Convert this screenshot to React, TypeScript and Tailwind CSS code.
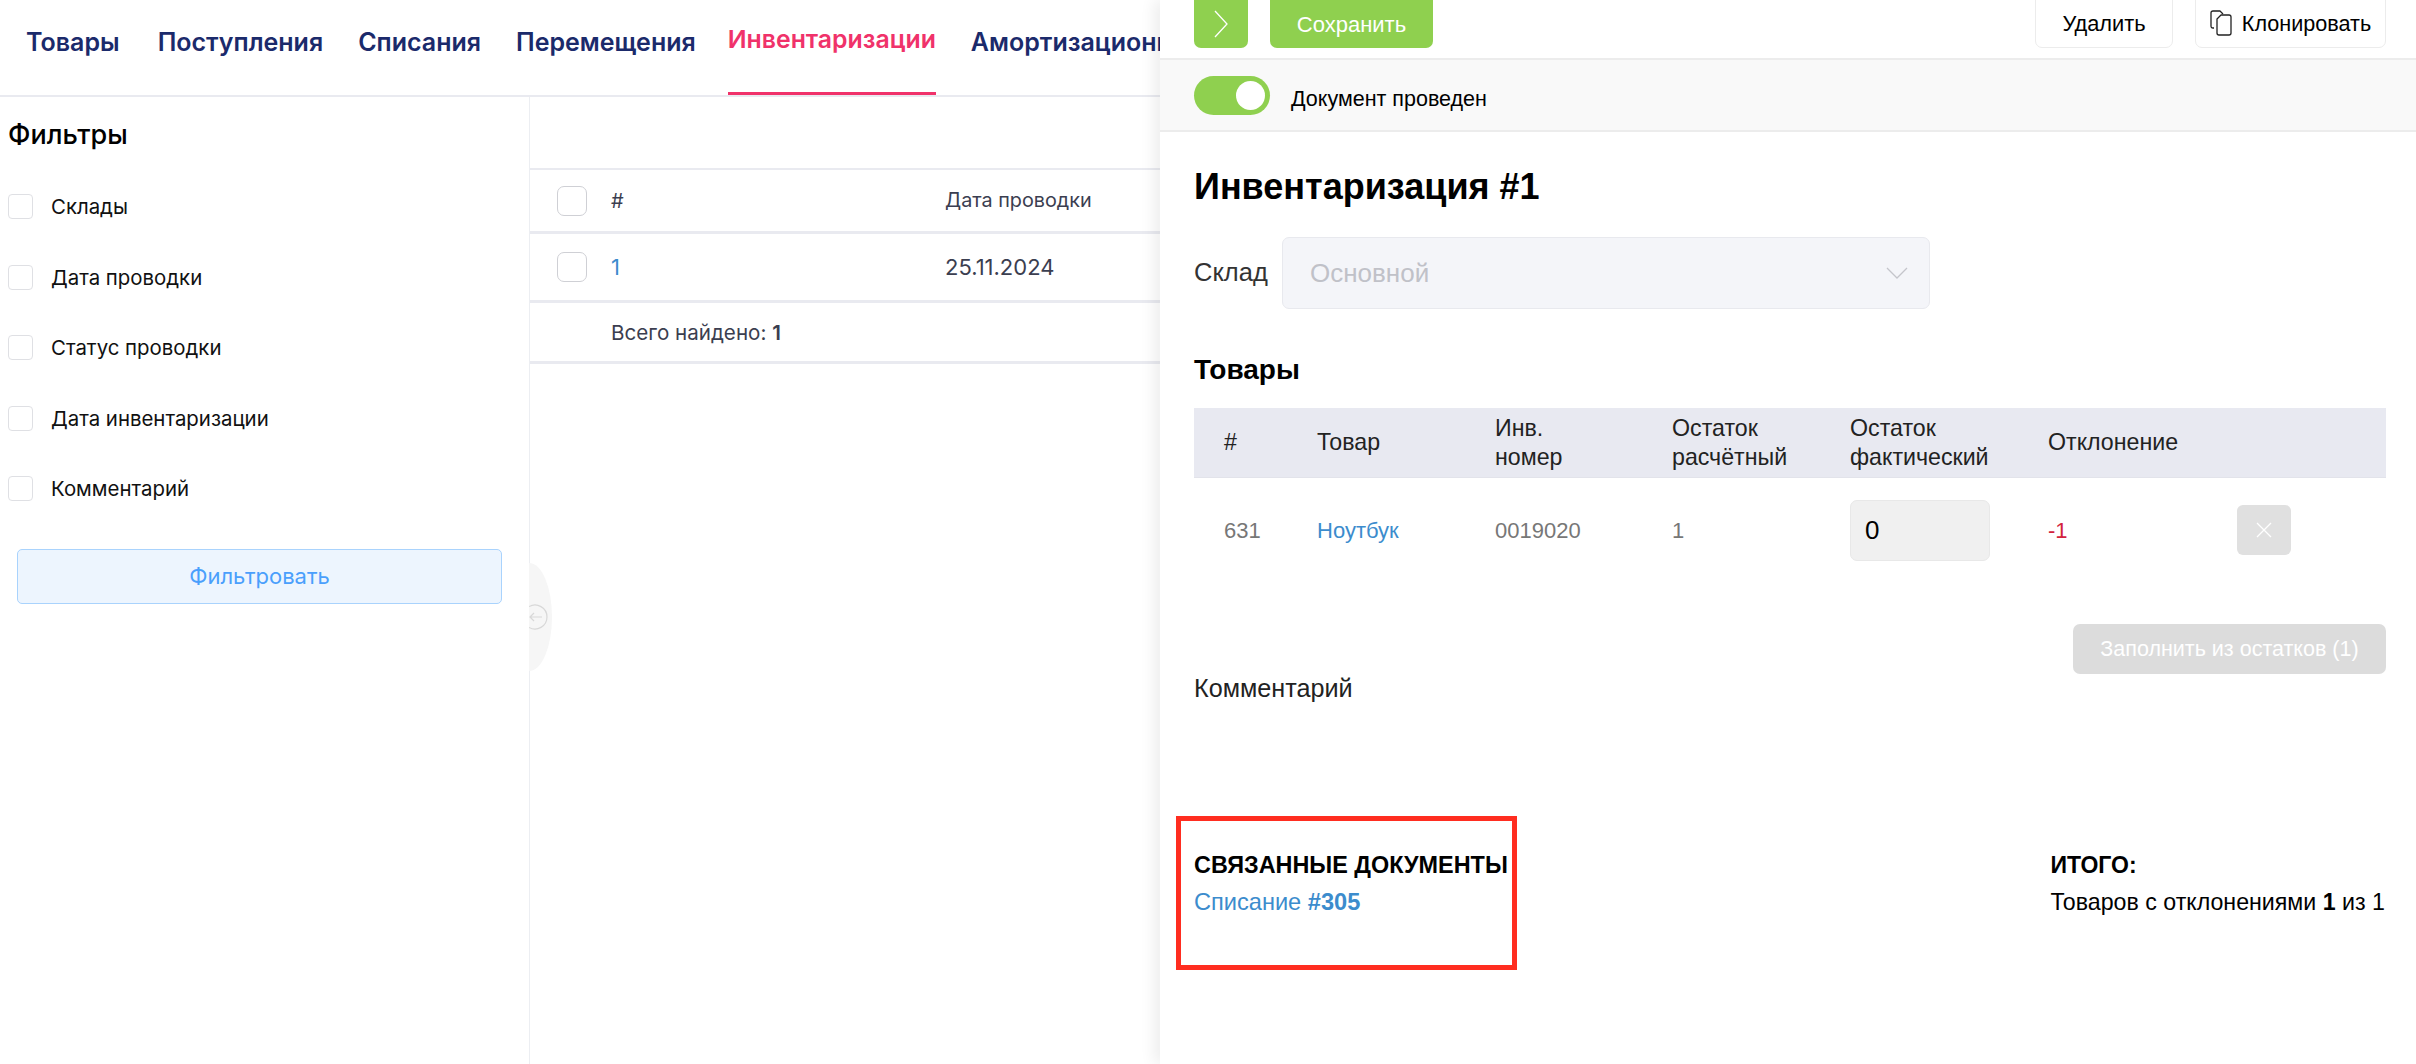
import React from "react";

const filters = ["Склады", "Дата проводки", "Статус проводки", "Дата инвентаризации", "Комментарий"];
const tabs = ["Товары", "Поступления", "Списания", "Перемещения", "Инвентаризации", "Амортизационные"];

function Box({ cls }: { cls: string }) {
  return <span className={"block shrink-0 bg-white border " + cls} />;
}

export default function App() {
  return (
    <div className="relative w-[2416px] h-[1064px] overflow-hidden bg-white font-['Inter',sans-serif] text-[20px] text-[#111]">
      {/* Tabs */}
      <div className="h-[97px] flex gap-[35px] pl-[26px] border-b-2 border-[#e9eaf0] overflow-hidden">
        {tabs.map((t) =>
          t === "Инвентаризации" ? (
            <div key={t} className="ml-[-3px] h-[95px] border-b-[3px] border-[#f0326a] text-[#f0326a] font-semibold text-[24.8px] whitespace-nowrap leading-[78px]">
              {t}
            </div>
          ) : (
            <div key={t} className={(t === "Товары" ? "mr-[3px] " : "") + "h-[95px] text-[#1b2a6b] font-semibold text-[25px] whitespace-nowrap leading-[84px]"}>
              {t}
            </div>
          )
        )}
      </div>

      <div className="flex h-[967px]">
        {/* Filters */}
        <aside className="relative w-[530px] shrink-0 border-r border-[#eceef2] pl-[8px]">
          <h2 className="text-[27px] leading-[32px] font-medium text-black pt-[22px] h-[80px] box-content">Фильтры</h2>
          <div className="flex flex-col gap-[45.5px] mt-[-5px]">
            {filters.map((f) => (
              <label key={f} className="flex items-center gap-[18px] h-[25px]">
                <Box cls="w-[25px] h-[25px] rounded-[4px] border-[#dfe0e4]" />
                <span className="leading-[27px] text-[20.4px] whitespace-nowrap">{f}</span>
              </label>
            ))}
          </div>
          <button className="mt-[48px] ml-[9px] w-[485px] h-[55px] rounded-[5px] border border-[#a9d3fd] bg-[#edf5fe] text-[#4a9ffc] text-[22px]">
            Фильтровать
          </button>
          <div className="absolute left-[529px] top-[466px] w-[23px] h-[108px] bg-[#f6f6f6] rounded-tr-[100%_50%] rounded-br-[100%_50%] flex items-center">
            <svg width="19" height="28" viewBox="0 0 19 28" fill="none" stroke="#d8d8d8" strokeWidth="1.2">
              <path d="M0 3.6 A12 12 0 1 1 0 24.4" />
              <path d="M1 14 H13 M5 10 L1 14 L5 18" />
            </svg>
          </div>
        </aside>

        {/* List */}
        <main className="flex-1 pt-[71px] text-[#3b3e50]">
          <div className="h-[66px] border-t-2 border-b-[3px] border-[#e9eaf0] flex items-center pl-[27px]">
            <Box cls="w-[30px] h-[30px] rounded-[7px] border-[#cfd0d5]" />
            <span className="ml-[24px] w-[334px]">#</span>
            <span className="text-[19.8px]">Дата проводки</span>
          </div>
          <div className="h-[69px] border-b-[3px] border-[#e9eaf0] flex items-center pl-[27px]">
            <Box cls="w-[30px] h-[30px] rounded-[7px] border-[#cfd0d5]" />
            <span className="ml-[24px] w-[334px] text-[#3c8ccd] text-[22px]">1</span>
            <span className="text-[22px]">25.11.2024</span>
          </div>
          <div className="h-[61px] border-b-[3px] border-[#e9eaf0] flex items-center pl-[81px] pt-[2px]">
            <span className="text-[20.6px]">
              Всего найдено: <span className="font-semibold">1</span>
            </span>
          </div>
        </main>
      </div>

      {/* Document panel */}
      <section className="absolute left-[1160px] top-0 w-[1256px] h-[1064px] bg-white shadow-[-6px_0_14px_rgba(0,0,0,0.07)] font-['Liberation_Sans',sans-serif] flex flex-col">
        <div className="h-[60px] shrink-0 border-b-2 border-[#ececec] pl-[34px] pr-[30px] flex items-end pb-[10px] overflow-hidden">
          <button className="w-[54px] h-[60px] rounded-b-[7px] bg-[#8fd04f] flex items-center justify-center pt-[12px]">
            <svg width="16" height="34" viewBox="0 0 16 34" fill="none" stroke="#fff" strokeWidth="1.3">
              <path d="M2 4 L14 17 L2 30" />
            </svg>
          </button>
          <button className="ml-[22px] w-[163px] h-[60px] rounded-b-[7px] bg-[#8fd04f] text-white text-[22px] pt-[12px]">
            Сохранить
          </button>
          <button className="ml-auto w-[138px] h-[60px] rounded-b-[7px] border border-[#ececec] text-black text-[21.8px] pt-[12px]">
            Удалить
          </button>
          <button className="ml-[22px] w-[191px] h-[60px] rounded-b-[7px] border border-[#ececec] text-black text-[21.6px] pt-[12px] flex items-center justify-center gap-[10px]">
            <svg width="22" height="26" viewBox="0 0 22 26" fill="none" stroke="#222" strokeWidth="1.3" strokeLinejoin="round" className="mt-[-2px]">
              <path d="M4 18 H3 Q1 18 1 16 V3 Q1 1 3 1 H10 L13 4" />
              <path d="M7 9 L11 5 H19 Q21 5 21 7 V23 Q21 25 19 25 H9 Q7 25 7 23 Z" />
            </svg>
            Клонировать
          </button>
        </div>

        <div className="h-[72px] shrink-0 bg-[#f9f9f9] border-b-2 border-[#ececec] pl-[34px] flex items-center gap-[21px]">
          <span className="relative w-[76px] h-[39px] rounded-full bg-[#8fd04f]">
            <span className="absolute right-[5px] top-[5px] w-[29px] h-[29px] rounded-full bg-white" />
          </span>
          <span className="text-[21.5px] text-black mt-[8px]">Документ проведен</span>
        </div>

        <div className="pl-[34px] pr-[30px]">
          <h1 className="mt-[34px] text-[36px] leading-[42px] font-bold text-black">Инвентаризация #1</h1>

          <div className="mt-[29px] flex items-center">
            <span className="w-[88px] text-[25.5px] text-[#333] mt-[-2px]">Склад</span>
            <div className="w-[648px] h-[72px] rounded-[7px] bg-[#f4f5f9] border border-[#e8e9ee] flex items-center pl-[27px] pr-[21px] justify-between">
              <span className="text-[26px] text-[#c0c1c8] mt-[1px]">Основной</span>
              <svg width="22" height="12" viewBox="0 0 22 12" fill="none" stroke="#c4c5cb" strokeWidth="1.3">
                <path d="M1 1 L11 11 L21 1" />
              </svg>
            </div>
          </div>

          <h2 className="mt-[43px] text-[28px] leading-[36px] font-bold text-black">Товары</h2>

          <div className="mt-[20px] h-[70px] bg-[#e8e9f1] border-b border-[#e2e3ea] grid grid-cols-[93px_178px_177px_178px_198px_1fr] pl-[30px] items-center text-[23.2px] leading-[29px] text-[#222]">
            <span>#</span>
            <span>Товар</span>
            <span>Инв.<br />номер</span>
            <span>Остаток<br />расчётный</span>
            <span>Остаток<br />фактический</span>
            <span>Отклонение</span>
          </div>

          <div className="h-[104px] grid grid-cols-[93px_178px_177px_178px_198px_189px_1fr] pl-[30px] items-center text-[22px] text-[#777]">
            <span>631</span>
            <span className="text-[#3c8ccd]">Ноутбук</span>
            <span>0019020</span>
            <span>1</span>
            <div className="w-[140px] h-[61px] rounded-[7px] bg-[#f0f0f0] border border-[#e8e8e8] flex items-center pl-[14px] text-[26px] text-black">0</div>
            <span className="text-[#d2223c]">-1</span>
            <span className="w-[54px] h-[50px] rounded-[6px] bg-[#e0e0e0] flex items-center justify-center">
              <svg width="18" height="18" viewBox="0 0 18 18" stroke="#fff" strokeWidth="1.3">
                <path d="M2 2 L16 16 M16 2 L2 16" />
              </svg>
            </span>
          </div>

          <div className="mt-[42px] flex justify-end">
            <button className="w-[313px] h-[50px] rounded-[7px] bg-[#dcdcdc] text-white text-[21.5px]">Заполнить из остатков (1)</button>
          </div>

          <div className="mt-[0px] text-[25.2px] leading-[28px] text-[#222]">Комментарий</div>

          <div className="mt-[149px] flex justify-between pr-[1px]">
            <div>
              <div className="text-[23.4px] leading-[28px] font-bold text-black whitespace-nowrap">СВЯЗАННЫЕ ДОКУМЕНТЫ</div>
              <div className="mt-[9px] text-[23.6px] leading-[28px] text-[#3c8ccd]">
                Списание <span className="font-bold">#305</span>
              </div>
            </div>
            <div>
              <div className="text-[23px] leading-[28px] font-bold text-black">ИТОГО:</div>
              <div className="mt-[9px] text-[23.2px] leading-[28px] text-black whitespace-nowrap">
                Товаров с отклонениями <b>1</b> из 1
              </div>
            </div>
          </div>
        </div>

        {/* red annotation */}
        <div className="absolute left-[16px] top-[816px] w-[341px] h-[154px] border-[5px] border-[#ff2d20]" />
      </section>
    </div>
  );
}
